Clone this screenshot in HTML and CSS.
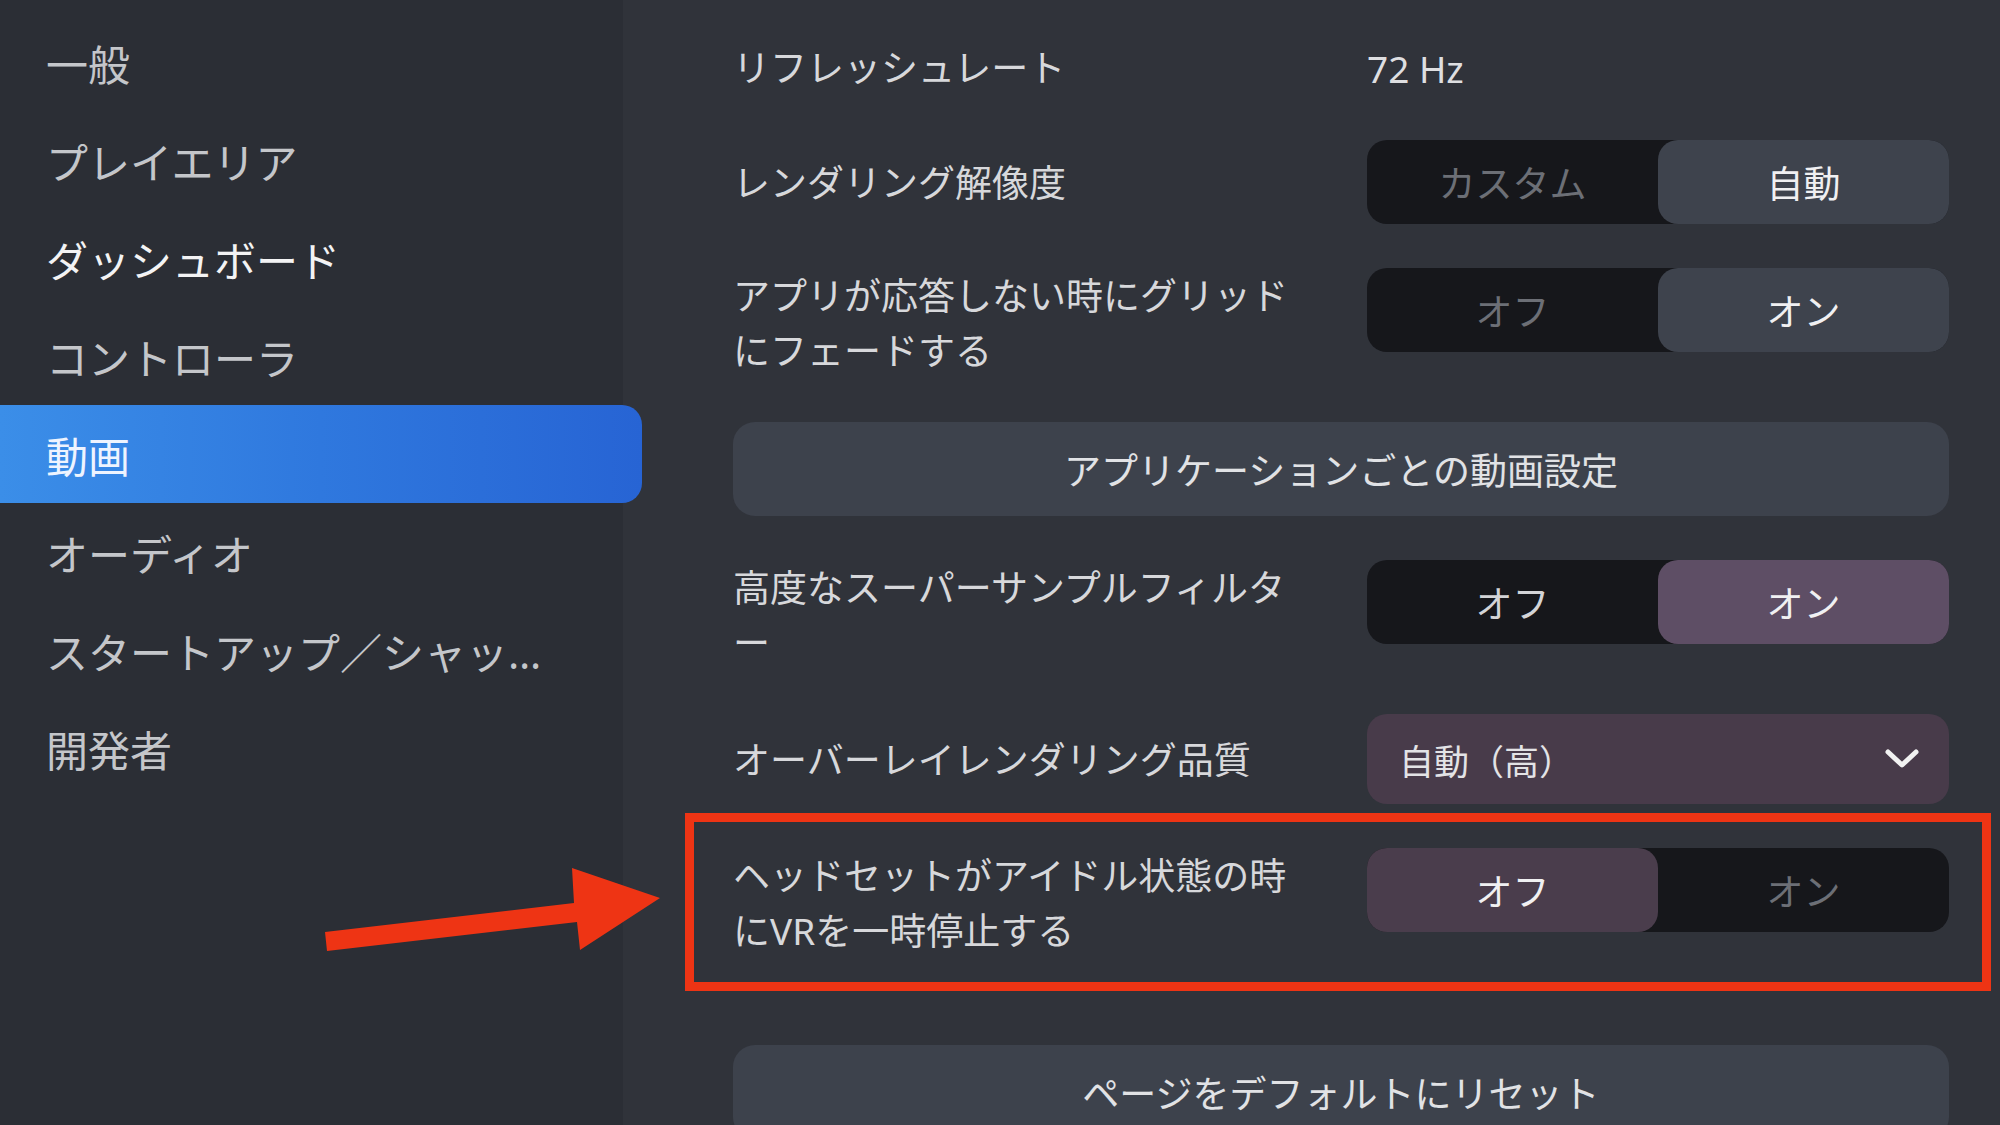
FILE: index.html
```html
<!DOCTYPE html>
<html lang="ja">
<head>
<meta charset="utf-8">
<title>設定 - 動画</title>
<link rel="stylesheet" href="styles.css">
</head>
<body>
<div class="app">
  <nav class="sidebar">
    <div class="nav-item">一般</div>
    <div class="nav-item">プレイエリア</div>
    <div class="nav-item hover">ダッシュボード</div>
    <div class="nav-item">コントローラ</div>
    <div class="nav-item active">動画</div>
    <div class="nav-item">オーディオ</div>
    <div class="nav-item"><span class="nav-text">スタートアップ／シャットダウン</span></div>
    <div class="nav-item">開発者</div>
  </nav>

  <main class="content">
    <div class="row">
      <div class="label">リフレッシュレート</div>
      <div class="control value">72 Hz</div>
    </div>

    <div class="row">
      <div class="label">レンダリング解像度</div>
      <div class="segmented">
        <span class="seg">カスタム</span>
        <span class="seg selected">自動</span>
      </div>
    </div>

    <div class="row multi">
      <div class="label">アプリが応答しない時にグリッドにフェードする</div>
      <div class="segmented">
        <span class="seg">オフ</span>
        <span class="seg selected">オン</span>
      </div>
    </div>

    <div class="wide-button">アプリケーションごとの動画設定</div>

    <div class="row multi">
      <div class="label">高度なスーパーサンプルフィルター</div>
      <div class="segmented">
        <span class="seg bright">オフ</span>
        <span class="seg selected accent">オン</span>
      </div>
    </div>

    <div class="row">
      <div class="label">オーバーレイレンダリング品質</div>
      <div class="select">
        <span class="select-text">自動（高）</span>
        <svg class="chevron" viewBox="0 0 34 20" width="34" height="20">
          <polyline points="3,3 17,16 31,3" fill="none" stroke="#f2f2f2" stroke-width="5" stroke-linecap="round" stroke-linejoin="round"/>
        </svg>
      </div>
    </div>

    <div class="row multi highlighted">
      <div class="label">ヘッドセットがアイドル状態の時にVRを一時停止する</div>
      <div class="segmented">
        <span class="seg selected accent-dim">オフ</span>
        <span class="seg">オン</span>
      </div>
      <div class="callout-box"></div>
    </div>

    <div class="wide-button reset">ページをデフォルトにリセット</div>
  </main>

  <svg class="callout-arrow" viewBox="0 0 345 95" width="345" height="95">
    <polygon points="5,72 254,43 252,8 340,38 260,90 257,62 7,91" fill="#ee3414"/>
  </svg>
</div>
</body>
</html>
```

FILE: styles.css
```css
html, body {
  margin: 0;
  padding: 0;
}

body {
  width: 2000px;
  height: 1125px;
  overflow: hidden;
  background: #30333a;
  font-family: "Noto Sans", "Noto Sans CJK JP", sans-serif;
  color: #d7d8db;
}

.app {
  position: relative;
  display: flex;
  width: 2000px;
  height: 1125px;
}

/* left navigation */
.sidebar {
  position: relative;
  z-index: 1;
  flex: 0 0 623px;
  display: flex;
  flex-direction: column;
  padding-top: 13px;
  background: #2b2e35;
  box-sizing: border-box;
}

.nav-item {
  flex-shrink: 0;
  height: 98px;
  display: flex;
  align-items: center;
  padding-left: 46px;
  font-size: 42px;
  color: #c4c6ca;
  white-space: nowrap;
}

.nav-item.hover {
  color: #f3f3f4;
}

.nav-item.active {
  margin-right: -19px;
  border-radius: 0 20px 20px 0;
  background: linear-gradient(90deg, #3b8ee8 0%, #2f78de 50%, #2764d4 100%);
  color: #eef4ff;
}

.nav-text {
  display: block;
  max-width: 512px;
  overflow: hidden;
  text-overflow: ellipsis;
}

/* settings column */
.content {
  flex: 1;
  display: flex;
  flex-direction: column;
  gap: 44px;
  padding: 38px 51px 0 110px;
  background: #30333a;
}

.content > * {
  flex-shrink: 0;
}

.row {
  position: relative;
  display: flex;
  align-items: center;
  justify-content: space-between;
}

.row.multi {
  align-items: flex-start;
}

.label {
  flex: 0 0 578px;
  font-size: 37px;
  line-height: 55px;
  color: #d7d8db;
}

.control {
  width: 582px;
}

.value {
  font-size: 37px;
  line-height: 55px;
  color: #dedfe1;
  padding-top: 3px;
}

/* two-way switch */
.segmented {
  display: flex;
  width: 582px;
  height: 84px;
  flex: 0 0 582px;
  border-radius: 20px;
  background: #16171b;
}

.seg {
  flex: 1;
  display: flex;
  align-items: center;
  justify-content: center;
  border-radius: 20px;
  font-size: 37px;
  color: #6c6f76;
}

.seg.bright {
  color: #d3d4d7;
}

.seg.selected {
  background: #3e434d;
  color: #f0f0f2;
}

.seg.selected.accent {
  background: #5e4e65;
}

.seg.selected.accent-dim {
  background: #4a3d4c;
}

/* full-width buttons */
.wide-button {
  height: 94px;
  display: flex;
  align-items: center;
  justify-content: center;
  border-radius: 22px;
  background: #3d424c;
  font-size: 37px;
  color: #e1e2e5;
}

.wide-button.reset {
  margin-top: 43px;
}

/* dropdown */
.select {
  flex: 0 0 582px;
  height: 90px;
  display: flex;
  align-items: center;
  justify-content: space-between;
  padding: 0 30px 0 32px;
  box-sizing: border-box;
  border-radius: 20px;
  background: #483b4a;
}

.select-text {
  font-size: 35px;
  color: #e3e3e6;
}

.chevron {
  display: block;
}

/* red annotation */
.callout-box {
  position: absolute;
  top: -35px;
  left: -48px;
  right: -42px;
  bottom: -33px;
  border: 9px solid #ee3414;
  pointer-events: none;
}

.callout-arrow {
  position: absolute;
  left: 320px;
  top: 860px;
  z-index: 2;
}
```
